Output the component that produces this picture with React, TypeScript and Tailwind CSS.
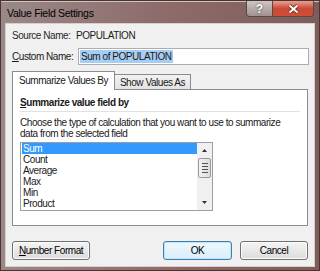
const ui = { fontFamily: '"Liberation Sans", Arial, sans-serif' };

const items = ["Sum", "Count", "Average", "Max", "Min", "Product"];

function Btn({ children, primary, className }: { children: React.ReactNode; primary?: boolean; className?: string }) {
  return (
    <div
      className={
        "flex h-[19px] items-center justify-center whitespace-nowrap rounded-[3px] border text-black " +
        (primary
          ? "border-[#3c7fb1] bg-gradient-to-b from-[#eef8fe] to-[#d9eefb] shadow-[inset_0_0_0_1px_#c4e4f6] "
          : "border-[#707070] bg-gradient-to-b from-[#f4f4f4] to-[#dcdcdc] shadow-[inset_0_0_0_1px_#fcfcfc] ") +
        (className ?? "")
      }
    >
      {children}
    </div>
  );
}

export default function App() {
  return (
    <div
      style={ui}
      className="flex h-[271px] w-[320px] flex-col overflow-hidden border border-[#4a3432] bg-gradient-to-r from-[#9a8988] via-[#8d6c6a] to-[#7d5c59] shadow-[inset_0_1px_0_#cfc3c3]"
    >
      {/* title bar */}
      <div className="flex h-[22px] shrink-0 items-start">
        <div className="whitespace-nowrap pl-[6px] pt-[5px] text-[10.5px] tracking-[-0.3px] text-black">
          Value Field Settings
        </div>
        <div className="ml-auto mr-[5px] flex h-[16px] overflow-hidden rounded-b-[4px] border border-t-0 border-[#5b4846]">
          <div className="flex w-[25px] items-center justify-center bg-gradient-to-b from-[#cfc6c5] to-[#a09190] text-[12px] font-bold leading-none text-white [text-shadow:0_0_2px_#333]">
            ?
          </div>
          <div className="flex w-[41px] items-center justify-center border-l border-[#5b4846] bg-gradient-to-b from-[#e8a093] via-[#c94a36] to-[#d24c33]">
            <svg width="11" height="10" viewBox="0 0 11 10">
              <path d="M1.5 1.5 L9.5 8.5 M9.5 1.5 L1.5 8.5" stroke="#5a1a10" strokeWidth="3.2" />
              <path d="M1.5 1.5 L9.5 8.5 M9.5 1.5 L1.5 8.5" stroke="white" strokeWidth="2" />
            </svg>
          </div>
        </div>
      </div>

      {/* client area */}
      <div className="mx-[4px] mb-[3px] flex flex-1 flex-col whitespace-nowrap border border-[#d8cfcf] bg-[#f0f0f0] text-[10px] tracking-[-0.45px] text-[#1a1a1a]">
        <div className="flex h-[22px] items-center pl-[6px]">
          <span className="w-[64px] text-[#2a2a2a]">Source Name:</span>
          <span>POPULATION</span>
        </div>
        <div className="mt-[2px] flex h-[17px] items-center pl-[6px] pr-[5px]">
          <span className="w-[66px]">
            <span className="underline">C</span>ustom Name:
          </span>
          <div className="flex h-[17px] flex-1 items-center border border-[#abadb3] bg-white px-[1px]">
            <span className="bg-[#a6cdf2] px-[1px] leading-[13px]">Sum of POPULATION</span>
          </div>
        </div>

        {/* tabs */}
        <div className="mt-[6px] flex h-[18px] items-end pl-[6px]">
          <div className="relative z-10 -mb-px flex h-[19px] w-[103px] items-center justify-center border border-b-0 border-[#898c95] bg-white pb-[1px]">
            Summarize Values By
          </div>
          <div className="flex h-[15px] w-[76px] items-center justify-center border border-b-0 border-l-0 border-[#898c95] bg-gradient-to-b from-[#f2f2f2] to-[#e3e3e3]">
            Show Values As
          </div>
        </div>
        <div className="mx-[6px] flex h-[137px] flex-col border border-[#898c95] bg-white px-[7px]">
          <div className="mt-[7px] border-b border-[#e2e2e2] pb-[2px] font-bold leading-[12px]">
            <span className="underline">S</span>ummarize value field by
          </div>
          <div className="mt-[5px] leading-[11px]">
            Choose the type of calculation that you want to use to summarize
            <br />
            data from the selected field
          </div>
          <div className="mt-[3px] flex h-[69px] w-[193px] border border-[#9a9ea6] bg-white">
            <div className="flex-1 pl-[1px]">
              {items.map((it, i) => (
                <div
                  key={it}
                  className={"h-[11px] pl-[1px] leading-[11px] " + (i === 0 ? "bg-[#3399ff] text-white" : "")}
                >
                  {it}
                </div>
              ))}
            </div>
            <div className="flex w-[15px] flex-col items-center bg-[#f0f0f0]">
              <svg width="15" height="15" viewBox="0 0 15 15">
                <path d="M5 9 L7.5 6 L10 9 Z" fill="#333" />
              </svg>
              <div className="flex h-[20px] w-[13px] flex-col items-center justify-center gap-[2px] rounded-[2px] border border-[#9a9a9a] bg-gradient-to-r from-[#f2f2f2] to-[#dcdcdc]">
                <div className="h-px w-[6px] bg-[#555]" />
                <div className="h-px w-[6px] bg-[#555]" />
                <div className="h-px w-[6px] bg-[#555]" />
                <div className="h-px w-[6px] bg-[#555]" />
              </div>
              <div className="flex-1" />
              <svg width="15" height="15" viewBox="0 0 15 15">
                <path d="M5 6 L7.5 9 L10 6 Z" fill="#333" />
              </svg>
            </div>
          </div>
        </div>

        {/* buttons */}
        <div className="mt-[15px] flex items-center px-[6px]">
          <Btn className="w-[78px]">
            <span>
              <span className="underline">N</span>umber Format
            </span>
          </Btn>
          <Btn primary className="ml-auto w-[69px]">
            OK
          </Btn>
          <Btn className="ml-[8px] w-[68px]">Cancel</Btn>
        </div>
      </div>
    </div>
  );
}
